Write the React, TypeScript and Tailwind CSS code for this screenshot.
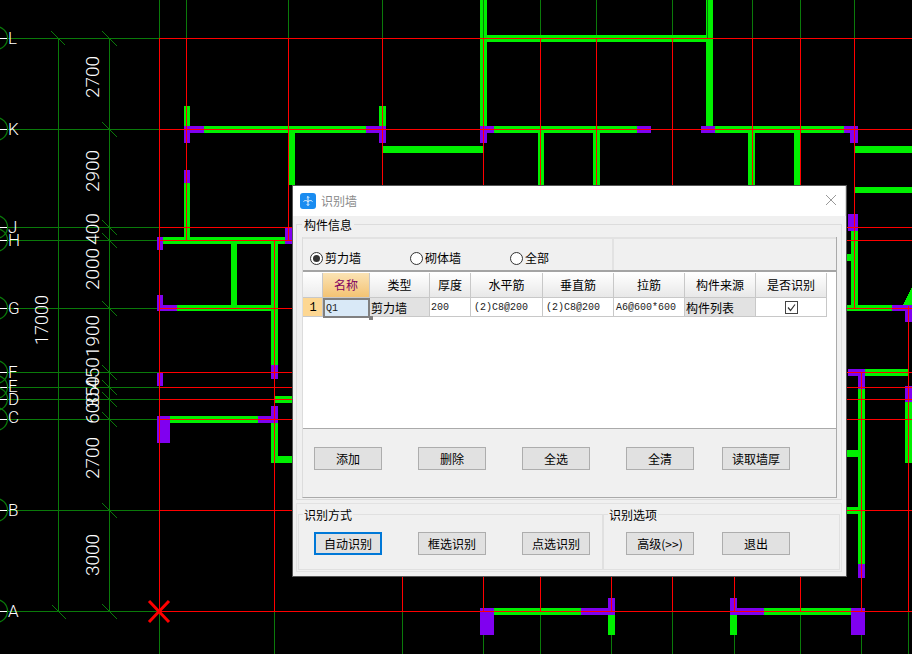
import React from "react";

type R = [number, number, number, number];
const G = "#00f000";
const P = "#8000f0";
const DG = "#0a7a0a";
const RED = "#ff0000";

const walls: R[] = [
  [184, 106, 6, 20], [204, 126, 162, 7], [379, 106, 7, 20], [383, 146, 100, 7],
  [480, 0, 7, 126], [487, 35, 220, 7], [706, 0, 7, 126], [494, 126, 143, 7],
  [538, 133, 6, 52], [593, 133, 7, 52], [715, 126, 129, 7], [748, 133, 7, 52],
  [794, 133, 6, 52], [855, 146, 57, 7], [855, 187, 57, 6],
  [184, 183, 6, 54], [163, 237, 122, 7], [289, 133, 6, 52], [231, 244, 6, 62],
  [271, 244, 7, 121], [177, 305, 94, 6], [275, 396, 17, 7], [271, 423, 7, 40],
  [271, 456, 21, 7], [170, 416, 88, 7],
  [494, 608, 87, 7], [608, 615, 7, 20], [730, 615, 7, 20], [764, 608, 87, 7],
  [851, 231, 7, 77], [846, 254, 5, 7], [846, 305, 46, 6], [865, 369, 43, 7],
  [858, 389, 7, 175], [905, 402, 7, 61], [846, 450, 12, 7], [846, 507, 12, 7],
];
const columns: R[] = [
  [184, 126, 20, 7], [184, 133, 6, 10], [366, 126, 20, 7], [379, 133, 7, 10],
  [480, 126, 14, 7], [480, 133, 7, 10], [637, 126, 14, 7], [701, 126, 14, 7],
  [844, 126, 14, 7], [850, 133, 8, 10], [184, 170, 6, 13], [157, 237, 6, 13],
  [285, 227, 7, 17], [157, 295, 6, 16], [163, 305, 14, 6], [157, 373, 6, 13],
  [271, 365, 7, 14], [271, 406, 7, 17], [157, 416, 13, 27], [258, 416, 20, 7],
  [480, 608, 14, 27], [581, 608, 34, 7], [608, 598, 7, 10], [730, 598, 7, 17],
  [730, 608, 34, 7], [851, 608, 14, 27], [858, 570, 7, 8], [848, 214, 10, 17],
  [892, 305, 20, 6], [905, 311, 7, 11], [848, 369, 17, 7], [858, 376, 7, 13],
  [858, 564, 7, 14], [905, 386, 7, 16],
];
const redV: [number, number, number][] = [
  [159, 38, 611], [186, 38, 240], [288, 38, 240], [274, 240, 611], [382, 38, 185],
  [483, 38, 185], [483, 577, 611], [540, 38, 185], [540, 577, 611], [596, 38, 185],
  [672, 38, 185], [672, 577, 611], [752, 38, 185], [800, 38, 185], [800, 577, 611],
  [854, 38, 308], [402, 577, 611], [611, 577, 611], [734, 577, 611], [861, 372, 611],
  [908, 306, 611],
];
const greenTop = [159, 186, 288, 382, 540, 596, 672, 752, 800, 854];
const greenBottom = [159, 274, 402, 483, 540, 611, 672, 734, 800, 861, 908];
const axes: [string, number][] = [
  ["L", 38], ["K", 129], ["J", 227], ["H", 240], ["G", 308], ["F", 372],
  ["E", 387], ["D", 399], ["C", 419], ["B", 510], ["A", 611],
];
const labelOffset: Record<string, number> = { F: 0, E: -1, D: 0, C: -2 };
const dims: [string, number, number, number][] = [
  ["2700", 92, 77, 19], ["2900", 92, 171, 19], ["400", 92, 229, 19], ["2000", 92, 269, 19],
  ["1900", 92, 336, 19], ["450", 92, 373, 19], ["350", 92, 392, 19], ["600", 92, 408, 19],
  ["2700", 92, 458, 19], ["3000", 92, 555, 19], ["17000", 41, 320, 18],
];

function Cad() {
  return (
    <svg width="912" height="654" viewBox="0 0 912 654" className="block">
      <g shapeRendering="crispEdges">
        {axes.map(([n, y]) => <rect key={n} x="7" y={y} width="152" height="1" fill={DG} />)}
        <rect x="58" y="38" width="1" height="573" fill={DG} />
        <rect x="109" y="38" width="1" height="573" fill={DG} />
        {greenTop.map((x) => <rect key={x} x={x} y="0" width="1" height="38" fill={DG} />)}
        {greenBottom.map((x) => <rect key={x} x={x} y="611" width="1" height="43" fill={DG} />)}
        {walls.map((r, i) => <rect key={i} x={r[0]} y={r[1]} width={r[2]} height={r[3]} fill={G} />)}
        <polygon points="903,305 912,287 912,305" fill={G} />
        {columns.map((r, i) => <rect key={i} x={r[0]} y={r[1]} width={r[2]} height={r[3]} fill={P} />)}
        <rect x="707" y="0" width="1" height="38" fill={DG} />
        <rect x="483" y="0" width="1" height="38" fill={DG} />
        {axes.map(([n, y]) => <rect key={n} x="159" y={y} width="753" height="1" fill={RED} />)}
        {redV.map(([x, a, b], i) => <rect key={i} x={x} y={a} width="1" height={b - a} fill={RED} />)}
        {axes.map(([n, y]) => <line key={n} x1="102" y1={y - 7} x2="117" y2={y + 8} stroke={DG} />)}
        <line x1="51" y1="31" x2="65" y2="45" stroke={DG} />
        <line x1="52" y1="605" x2="66" y2="619" stroke={DG} />
      </g>
      {axes.map(([n, y]) => (
        <g key={n}>
          <circle cx="-4" cy={y} r="11.5" fill="none" stroke={DG} strokeWidth="1.3" />
          <rect x="0" y={y} width="7" height="1" fill="#fff" />
          <text
            x="8"
            y={y + 6 + (labelOffset[n] ?? 0)}
            fontSize="17"
            fill="#fff"
            fontWeight="300"
            fontFamily="Roboto, 'Liberation Sans', sans-serif"
          >
            {n}
          </text>
        </g>
      ))}
      {dims.map(([t, x, y, s], i) => (
        <text
          key={i}
          transform={`translate(${x + 7} ${y}) rotate(-90)`}
          textAnchor="middle"
          fontSize={s}
          fill="#fff"
          fontWeight="300"
          fontFamily="Roboto, 'Liberation Sans', sans-serif"
        >
          {t}
        </text>
      ))}
      <path d="M149 601 L169 622 M169 601 L149 622" stroke={RED} strokeWidth="3" fill="none" />
    </svg>
  );
}

function Btn({ children, primary, className }: { children: React.ReactNode; primary?: boolean; className?: string }) {
  return (
    <button
      className={
        "h-[23px] w-[68px] shrink-0 bg-[#e1e1e1] text-[12px] leading-none text-black " +
        (primary ? "border-2 border-[#0078d7] " : "border border-[#adadad] ") +
        (className ?? "")
      }
    >
      {children}
    </button>
  );
}

function Radio({ label, on, className }: { label: string; on?: boolean; className?: string }) {
  return (
    <div className={"flex items-center gap-[2px] " + (className ?? "")}>
      <span className="flex h-[13px] w-[13px] items-center justify-center rounded-full border border-[#333] bg-white">
        {on && <span className="h-[7px] w-[7px] rounded-full bg-[#333]" />}
      </span>
      <span className="text-[12px] leading-none text-black">{label}</span>
    </div>
  );
}

const headers: [string, string][] = [
  ["类型", "w-[60px]"], ["厚度", "w-[41px]"], ["水平筋", "w-[72px]"], ["垂直筋", "w-[71px]"],
  ["拉筋", "w-[71px]"], ["构件来源", "w-[71px]"], ["是否识别", "w-[71px]"],
];

function Cell({ children, className }: { children?: React.ReactNode; className?: string }) {
  return (
    <div className={"flex h-[19px] shrink-0 items-center overflow-hidden border-r border-b border-[#c8c8c8] pt-[1px] pl-[1px] text-[12px] leading-none text-black " + (className ?? "")}>
      {children}
    </div>
  );
}

function Mono({ children }: { children: React.ReactNode }) {
  return <span className="mt-[1px] font-['Liberation_Mono',monospace] text-[10px] leading-none text-[#222]">{children}</span>;
}

function GridTable() {
  return (
    <div className="h-[156px] bg-white pt-[1px]">
      <div className="flex h-[25px]">
        <div className="h-[25px] w-[20px] shrink-0 border-r border-b border-[#c8c8c8] bg-gradient-to-b from-white to-[#ececec]" />
        <div className="flex h-[25px] w-[47px] shrink-0 items-center justify-center border-r border-b border-[#c8c8c8] bg-gradient-to-b from-[#fbe3b4] to-[#f3c373] text-[12px] leading-none text-[#800060]">
          名称
        </div>
        {headers.map(([h, w]) => (
          <div key={h} className={"flex h-[25px] shrink-0 items-center justify-center border-r border-b border-[#c8c8c8] bg-gradient-to-b from-white to-[#e8e8e8] text-[12px] leading-none text-black " + w}>
            {h}
          </div>
        ))}
      </div>
      <div className="flex h-[19px]">
        <Cell className="w-[20px] justify-center bg-[#fdd792] font-['Liberation_Mono',monospace] text-[10px] text-[#800060]">1</Cell>
        <div className="relative h-[19px] w-[47px] shrink-0">
          <div className="flex h-[20px] items-center border-[2px] border-[#808080] bg-[#d9e9f7] pl-[1px] text-black">
            <Mono>Q1</Mono>
          </div>
          <span className="absolute right-[-3px] bottom-[-3px] h-[4px] w-[4px] bg-[#808080]" />
        </div>
        <Cell className="w-[60px] bg-[#e2e2e2]">剪力墙</Cell>
        <Cell className="w-[41px]"><Mono>200</Mono></Cell>
        <Cell className="w-[72px] pl-[3px]"><Mono>(2)C8@200</Mono></Cell>
        <Cell className="w-[71px] pl-[3px]"><Mono>(2)C8@200</Mono></Cell>
        <Cell className="w-[71px] pl-[2px]"><Mono>A6@600*600</Mono></Cell>
        <Cell className="w-[71px] bg-[#e2e2e2]">构件列表</Cell>
        <Cell className="w-[71px] justify-center">
          <svg width="13" height="13" viewBox="0 0 13 13">
            <rect x="0.5" y="0.5" width="12" height="12" fill="#fff" stroke="#444" />
            <path d="M3 6.5 L5.5 9.5 L10 3.5" fill="none" stroke="#333" strokeWidth="1.2" />
          </svg>
        </Cell>
      </div>
    </div>
  );
}

function Dialog() {
  return (
    <div className="absolute top-[185px] left-[292px] flex h-[392px] w-[555px] flex-col border border-[#555] bg-white font-['Noto_Sans_CJK_SC','Liberation_Sans',sans-serif] shadow-[inset_-1px_-1px_0_#ddd]">
      <div className="flex h-[30px] shrink-0 items-center pr-[10px] pl-[7px]">
        <svg width="16" height="16" viewBox="0 0 16 16" className="shrink-0">
          <rect width="16" height="16" rx="3" fill="#1a8cf0" />
          <path d="M8 3.5 V12.5 M3.5 8.5 C5 7 6.5 7.5 8 8.5 C9.5 7.5 11 7 12.5 8.5 M6.8 4.7 L8 3.5 L9.2 4.7 M6.8 11.3 L8 12.5 L9.2 11.3" fill="none" stroke="#fff" strokeWidth="0.9" />
        </svg>
        <span className="ml-[5px] text-[12px] leading-none text-[#8a8a8a]">识别墙</span>
        <svg width="10" height="10" viewBox="0 0 10 10" className="mt-[-3px] ml-auto">
          <path d="M0 0 L10 10 M10 0 L0 10" stroke="#999" strokeWidth="1" />
        </svg>
      </div>
      <div className="flex flex-1 flex-col bg-[#f0f0f0] pt-[2px] pr-[3px] pb-[3px] pl-[3px]">
        <fieldset className="h-[282px] w-[546px] shrink-0 border border-[#dcdcdc] pr-[4px] pb-[1px] pl-[5px]">
          <legend className="px-[2px] text-[12px] leading-[13px] text-black">构件信息</legend>
          <div className="mt-[6px] flex h-[261px] w-[535px] flex-col border-r border-b border-l border-r-[#aaa] border-b-[#aaa] border-l-[#dcdcdc]">
            <div className="flex h-[33px] shrink-0">
              <div className="flex w-[311px] items-center border-t-2 border-r-2 border-[#e2e2e2] pt-[7px] pl-[7px]">
                <Radio label="剪力墙" on className="w-[100px]" />
                <Radio label="砌体墙" className="w-[100px]" />
                <Radio label="全部" />
              </div>
              <div className="flex-1 border-t-2 border-[#e2e2e2]" />
            </div>
            <div className="h-[2px] shrink-0 bg-[#a4a4a4]" />
            <GridTable />
            <div className="h-[1px] shrink-0 bg-[#aaa]" />
            <div className="flex flex-1 pt-[18px] pl-[11px]">
              <Btn>添加</Btn>
              <Btn className="ml-[36px]">删除</Btn>
              <Btn className="ml-[36px]">全选</Btn>
              <Btn className="ml-[36px]">全清</Btn>
              <Btn className="ml-[28px]">读取墙厚</Btn>
            </div>
          </div>
        </fieldset>
        <div className="mt-[3px] flex h-[69px] w-[546px] shrink-0 border border-[#e2e2e2] px-[1px] pt-[4px] pb-[1px]">
          <fieldset className="h-[62px] w-[304px] shrink-0 border-t border-b border-l border-[#e0e0e0]">
            <legend className="ml-[4px] px-[1px] text-[12px] leading-[13px] text-black">识别方式</legend>
            <div className="mt-[11px] ml-[15px] flex">
              <Btn primary>自动识别</Btn>
              <Btn className="ml-[36px]">框选识别</Btn>
              <Btn className="ml-[36px]">点选识别</Btn>
            </div>
          </fieldset>
          <fieldset className="h-[62px] flex-1 border-t border-r border-b border-l-2 border-[#e0e0e0]">
            <legend className="ml-[4px] px-[1px] text-[12px] leading-[13px] text-black">识别选项</legend>
            <div className="mt-[11px] ml-[22px] flex">
              <Btn>高级(&gt;&gt;)</Btn>
              <Btn className="ml-[28px]">退出</Btn>
            </div>
          </fieldset>
        </div>
      </div>
    </div>
  );
}

export default function App() {
  return (
    <div className="relative h-[654px] w-[912px] overflow-hidden bg-black">
      <Cad />
      <Dialog />
    </div>
  );
}
